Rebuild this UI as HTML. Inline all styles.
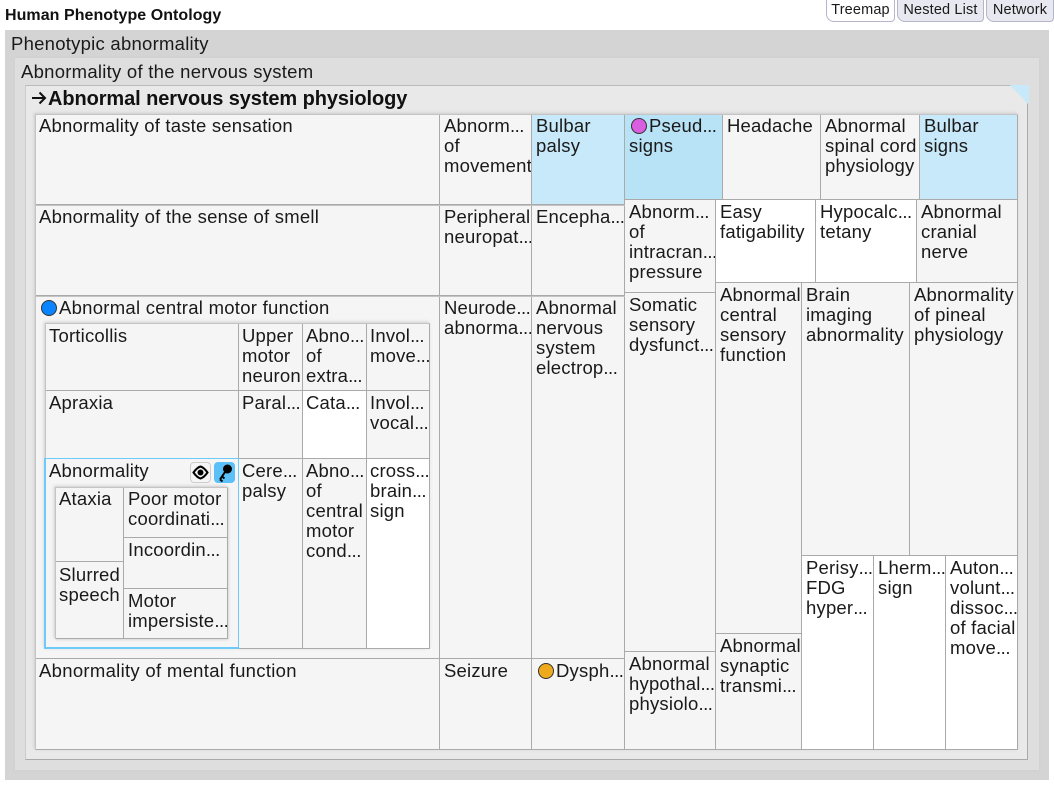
<!DOCTYPE html>
<html><head><meta charset="utf-8">
<style>
html,body{margin:0;padding:0;background:#fff;width:1054px;height:786px;overflow:hidden}
body{position:relative;font-family:"Liberation Sans",sans-serif;font-size:18.5px;line-height:20px;letter-spacing:.2px;color:#1a1a1a}
div{position:absolute;box-sizing:border-box}
i{font-style:normal;letter-spacing:-.5px}
.c{background:#f5f5f5;border:1px solid #aaa;border-width:0 1px 1px 0;padding:2px 0 0 4px;overflow:hidden;white-space:pre}
.w{background:#fff}
.b{background:#c8e9f9}
.p{background:#b8e2f5}
.d{width:16px;height:16px;border-radius:50%;border:1px solid #333;display:inline-block;position:absolute}
.t{white-space:pre}
.s{display:inline-block;width:20px}
.n{padding-top:3px}
.l{height:1px;background:#c4c4c4}
.v{width:1px;background:#c4c4c4}
.tab{top:0;height:22px;border:1px solid #b5b5cc;border-top:0;border-radius:0 0 4px 8px;font-size:14.5px;letter-spacing:.15px;text-align:center;line-height:21px}
</style></head><body>
<div class="t" style="left:5px;top:6px;font-size:16px;font-weight:bold;letter-spacing:.05px;color:#111">Human Phenotype Ontology</div>

<div class="tab" style="left:826px;width:69px;background:#fff">Treemap</div>
<div class="tab" style="left:897px;width:87px;background:#e8e8f0">Nested List</div>
<div class="tab" style="left:986px;width:68px;background:#e8e8f0">Network</div>

<div style="left:5px;top:30px;width:1044px;height:750px;background:#d4d4d4"></div>
<div class="t" style="left:11px;top:34px;letter-spacing:.25px">Phenotypic abnormality</div>
<div style="left:15px;top:58px;width:1024px;height:712px;background:#dedede;box-shadow:0 0 3px #ccc"></div>
<div class="t" style="left:21px;top:62px;letter-spacing:.26px">Abnormality of the nervous system</div>
<div style="left:25px;top:85px;width:1003px;height:675px;background:#e9e9e9;border:1px solid #aaa;border-top-color:#bbb;border-left:1px solid #ccc"></div>
<svg style="position:absolute;left:1010px;top:85px" width="19" height="20"><polygon points="0,0 19,0 19,20" fill="#c8e9f9"/></svg>
<svg style="position:absolute;left:30px;top:90px" width="18" height="16" viewBox="0 0 18 16"><path d="M2 8H15M9.5 2.5L15 8L9.5 13.5" fill="none" stroke="#111" stroke-width="2"/></svg>
<div class="t" style="left:48px;top:89px;font-size:20px;font-weight:bold;letter-spacing:-.09px;color:#111">Abnormal nervous system physiology</div>

<div style="left:35px;top:114px;width:983px;height:636px;background:#f5f5f5;box-shadow:-1px -1px 3px #ccc"></div>

<div class="c" style="left:35px;top:114px;width:405px;height:91px">Abnormality of taste sensation</div>
<div class="c" style="left:35px;top:205px;width:405px;height:91px;letter-spacing:.23px">Abnormality of the sense of smell</div>
<div class="c" style="left:35px;top:296px;width:405px;height:363px;letter-spacing:.27px"><span class="s"></span>Abnormal central motor function</div>
<div class="d" style="left:41px;top:300px;background:#0a84ff"></div>
<div class="c" style="left:35px;top:659px;width:405px;height:91px;letter-spacing:.3px">Abnormality of mental function</div>

<div class="c" style="left:440px;top:114px;width:92px;height:91px">Abnorm<i>...</i>
of
movement</div>
<div class="c" style="left:440px;top:205px;width:92px;height:91px">Peripheral
neuropat<i>...</i></div>
<div class="c" style="left:440px;top:296px;width:92px;height:363px">Neurode<i>...</i>
abnorma<i>...</i></div>
<div class="c" style="left:440px;top:659px;width:92px;height:91px">Seizure</div>

<div class="c b" style="left:532px;top:114px;width:93px;height:91px">Bulbar
palsy</div>
<div class="c" style="left:532px;top:205px;width:93px;height:91px">Encepha<i>...</i></div>
<div class="c" style="left:532px;top:296px;width:93px;height:363px">Abnormal
nervous
system
electrop<i>...</i></div>
<div class="c" style="left:532px;top:659px;width:93px;height:91px"><span class="s"></span>Dysph<i>...</i></div>
<div class="d" style="left:538px;top:663px;background:#eeaa1c"></div>

<div class="l" style="left:35px;top:205px;width:590px"></div>
<div class="l" style="left:35px;top:296px;width:590px"></div>

<div class="c p" style="left:625px;top:114px;width:98px;height:86px"><span class="s"></span>Pseud<i>...</i>
signs</div>
<div class="d" style="left:631px;top:118px;background:#d95fe0"></div>
<div class="c" style="left:723px;top:114px;width:98px;height:86px">Headache</div>
<div class="c" style="left:821px;top:114px;width:99px;height:86px">Abnormal
spinal cord
physiology</div>
<div class="c b" style="left:920px;top:114px;width:98px;height:86px">Bulbar
signs</div>

<div class="c" style="left:625px;top:200px;width:91px;height:93px">Abnorm<i>...</i>
of
intracran<i>...</i>
pressure</div>
<div class="c" style="left:625px;top:293px;width:91px;height:359px">Somatic
sensory
dysfunct<i>...</i></div>
<div class="c" style="left:625px;top:652px;width:91px;height:98px">Abnormal
hypothal<i>...</i>
physiolo<i>...</i></div>

<div class="c w" style="left:716px;top:200px;width:100px;height:83px">Easy
fatigability</div>
<div class="c w" style="left:816px;top:200px;width:101px;height:83px">Hypocalc<i>...</i>
tetany</div>
<div class="c" style="left:917px;top:200px;width:101px;height:83px">Abnormal
cranial
nerve</div>

<div class="c" style="left:716px;top:283px;width:86px;height:351px">Abnormal
central
sensory
function</div>
<div class="c" style="left:716px;top:634px;width:86px;height:116px">Abnormal
synaptic
transmi<i>...</i></div>
<div class="c" style="left:802px;top:283px;width:108px;height:273px">Brain
imaging
abnormality</div>
<div class="c" style="left:910px;top:283px;width:108px;height:273px">Abnormality
of pineal
physiology</div>
<div class="c w" style="left:802px;top:556px;width:72px;height:194px">Perisy<i>...</i>
FDG
hyper<i>...</i></div>
<div class="c w" style="left:874px;top:556px;width:72px;height:194px">Lherm<i>...</i>
sign</div>
<div class="c w" style="left:946px;top:556px;width:72px;height:194px">Auton<i>...</i>
volunt<i>...</i>
dissoc<i>...</i>
of facial
move<i>...</i></div>

<div class="v" style="left:35px;top:114px;height:636px"></div>
<div class="l" style="left:35px;top:114px;width:983px"></div>

<div style="left:45px;top:323px;width:385px;height:326px;box-shadow:-1px -1px 3px #ccc"></div>
<div class="c n" style="left:45px;top:323px;width:194px;height:68px">Torticollis</div>
<div class="c n" style="left:239px;top:323px;width:64px;height:68px;padding-left:3px">Upper
motor
neuron</div>
<div class="c n" style="left:303px;top:323px;width:64px;height:68px;padding-left:3px">Abno<i>...</i>
of
extra<i>...</i></div>
<div class="c n" style="left:367px;top:323px;width:63px;height:68px;padding-left:3px">Invol<i>...</i>
move<i>...</i></div>
<div class="c" style="left:45px;top:391px;width:194px;height:68px">Apraxia</div>
<div class="c" style="left:239px;top:391px;width:64px;height:68px;padding-left:3px">Paral<i>...</i></div>
<div class="c w" style="left:303px;top:391px;width:64px;height:68px;padding-left:3px">Cata<i>...</i></div>
<div class="c" style="left:367px;top:391px;width:63px;height:68px;padding-left:3px">Invol<i>...</i>
vocal<i>...</i></div>
<div class="c" style="left:44px;top:458px;width:195px;height:191px;border:solid #6ccbf8;border-width:1px 1px 2px 2px;padding:2px 0 0 3px">Abnormality</div>
<div class="c" style="left:239px;top:459px;width:64px;height:190px;padding-left:3px">Cere<i>...</i>
palsy</div>
<div class="c" style="left:303px;top:459px;width:64px;height:190px;padding-left:3px">Abno<i>...</i>
of
central
motor
cond<i>...</i></div>
<div class="c w" style="left:367px;top:459px;width:63px;height:190px;padding-left:3px">cross<i>...</i>
brain<i>...</i>
sign</div>
<div class="v" style="left:45px;top:323px;height:135px"></div>
<div class="l" style="left:45px;top:323px;width:385px"></div>

<div style="left:190px;top:462px;width:21px;height:21px;background:#f5f5f5;border:1px solid #ccc;border-radius:4px"></div>
<svg style="position:absolute;left:191px;top:463px" width="19" height="19" viewBox="0 0 19 19"><path d="M2.5 9.5Q6 4.5 9.5 3.5Q13 4.5 16.5 9.5Q13 14.5 9.5 15.5Q6 14.5 2.5 9.5Z" fill="none" stroke="#000" stroke-width="2"/><circle cx="9.5" cy="9.5" r="3" fill="#000"/></svg>
<div style="left:214px;top:462px;width:21px;height:21px;background:#5cc0f8;border-radius:4px"></div>
<svg style="position:absolute;left:214px;top:462px" width="21" height="21" viewBox="0 0 21 21"><circle cx="13.5" cy="7" r="4.5" fill="#000"/><path d="M11 10L6 17.5M8 14.5L10.5 16.5M6 17.5L8.5 19.5" stroke="#000" stroke-width="2" fill="none"/></svg>

<div style="left:55px;top:487px;width:173px;height:152px;box-shadow:-1px -1px 3px #ccc, 1px 1px 2px #ddd"></div>
<div class="c" style="left:55px;top:487px;width:69px;height:75px">Ataxia</div>
<div class="c n" style="left:55px;top:562px;width:69px;height:77px">Slurred
speech</div>
<div class="c" style="left:124px;top:487px;width:104px;height:51px">Poor motor
coordinati<i>...</i></div>
<div class="c" style="left:124px;top:538px;width:104px;height:51px">Incoordin<i>...</i></div>
<div class="c" style="left:124px;top:589px;width:104px;height:50px">Motor
impersiste<i>...</i></div>
<div class="v" style="left:55px;top:487px;height:152px"></div>
<div class="l" style="left:55px;top:487px;width:173px"></div>
</body></html>
